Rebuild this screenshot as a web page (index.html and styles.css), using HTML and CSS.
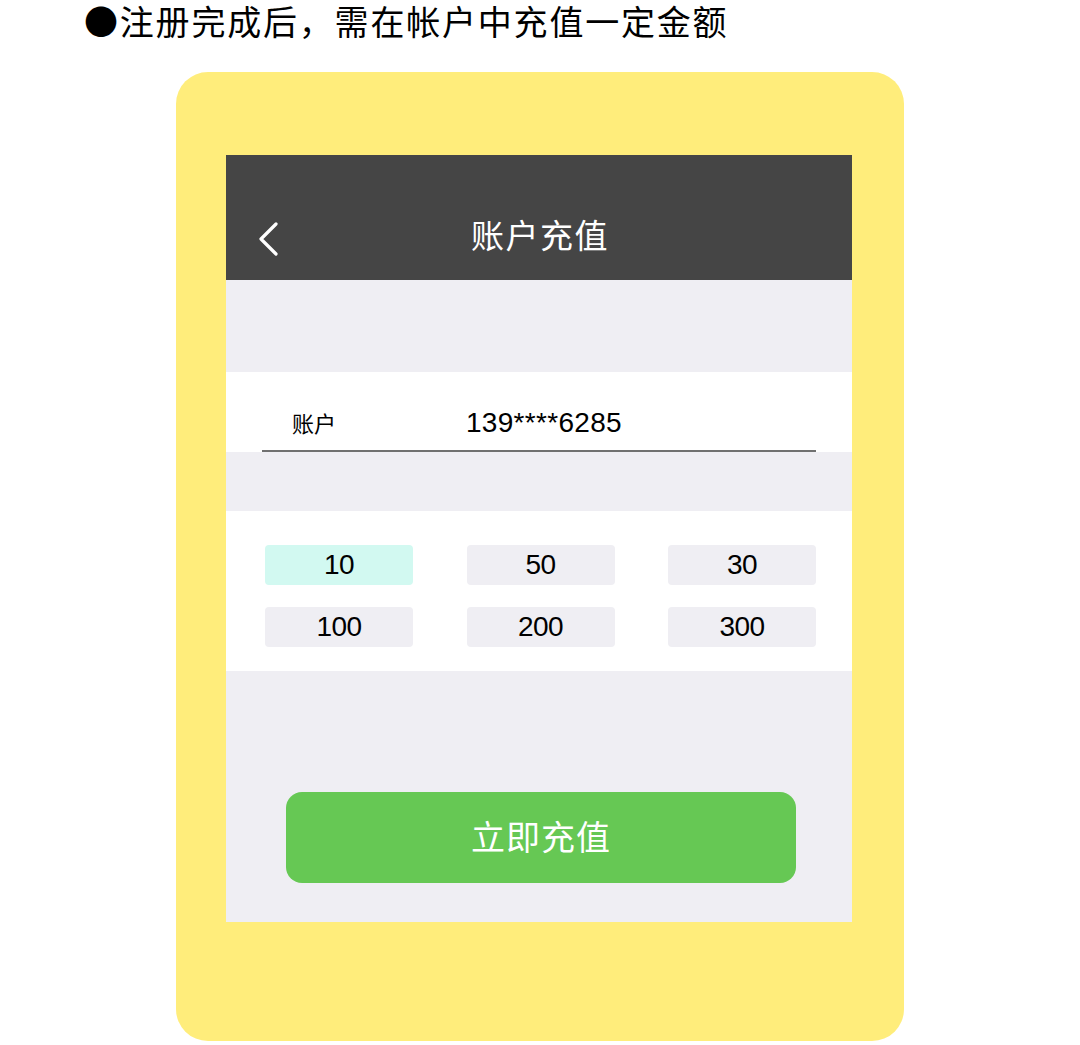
FILE: index.html
```html
<!DOCTYPE html>
<html lang="zh-CN">
<head>
    <meta charset="UTF-8">
    <meta name="viewport" content="width=device-width, initial-scale=1.0">
    <title>账户充值</title>
    <link rel="stylesheet" href="styles.css">
</head>
<body>
    <p class="intro">●注册完成后，需在帐户中充值一定金额</p>

    <div class="phone">
        <div class="screen">
            <header class="topbar">
                <svg class="back" width="24" height="36" viewBox="0 0 24 36">
                    <path d="M20 3 L5 18 L20 33" fill="none" stroke="#fff" stroke-width="3.2" stroke-linecap="round" stroke-linejoin="round"/>
                </svg>
                <h1>账户充值</h1>
            </header>

            <div class="spacer top"></div>

            <div class="account">
                <div class="account-row">
                    <span class="label">账户</span>
                    <span class="value">139****6285</span>
                </div>
            </div>

            <div class="spacer mid"></div>

            <div class="amounts">
                <button class="amount selected">10</button>
                <button class="amount">50</button>
                <button class="amount">30</button>
                <button class="amount">100</button>
                <button class="amount">200</button>
                <button class="amount">300</button>
            </div>

            <div class="submit-area">
                <button class="submit">立即充值</button>
            </div>
        </div>
    </div>
</body>
</html>
```

FILE: styles.css
```css
:root {
    --yellow: #ffed7b;
    --dark: #454545;
    --gray: #efeef3;
    --green: #66c854;
    --mint: #d2f9f1;
}

* {
    margin: 0;
    padding: 0;
    box-sizing: border-box;
}

body {
    font-family: "Noto Sans CJK SC", "Noto Sans", sans-serif;
    background: #fff;
    color: #000;
    width: 1080px;
}

.intro {
    font-family: "Noto Sans CJK SC", sans-serif;
    font-size: 34px;
    line-height: 42px;
    padding-left: 84px;
    letter-spacing: 1.8px;
}

.phone {
    margin: 30px 0 0 176px;
    width: 728px;
    height: 969px;
    background: var(--yellow);
    border-radius: 32px;
    padding: 83px 52px 0 50px;
}

.screen {
    width: 626px;
    background: var(--gray);
}

.topbar {
    height: 125px;
    background: var(--dark);
    color: #fff;
    display: flex;
    align-items: center;
    justify-content: center;
    position: relative;
}

.topbar h1 {
    font-size: 33px;
    font-weight: 400;
    letter-spacing: 1.5px;
    padding-top: 33px;
    margin-left: 2px;
}

.back {
    position: absolute;
    left: 30px;
    top: 66px;
}

.spacer.top {
    height: 92px;
}

.spacer.mid {
    height: 59px;
}

.account {
    background: #fff;
    height: 80px;
    padding: 0 36px;
}

.account-row {
    height: 80px;
    border-bottom: 2px solid #707070;
    display: flex;
    align-items: center;
    padding-top: 24px;
}

.label {
    font-size: 22px;
    width: 204px;
    padding-left: 30px;
    margin-top: -2px;
}

.value {
    font-family: "Liberation Sans", sans-serif;
    font-size: 28px;
    letter-spacing: 0.3px;
}

.amounts {
    background: #fff;
    height: 160px;
    padding: 34px 36px 0 39px;
    display: grid;
    grid-template-columns: repeat(3, 148px);
    grid-auto-rows: 40px;
    column-gap: 53.5px;
    row-gap: 22px;
}

.amount {
    border: none;
    border-radius: 4px;
    background: var(--gray);
    font-family: "Liberation Sans", sans-serif;
    font-size: 28px;
    color: #000;
    letter-spacing: -0.5px;
}

.amount.selected {
    background: var(--mint);
}

.submit-area {
    height: 251px;
    padding: 121px 56px 0 60px;
}

.submit {
    width: 510px;
    height: 91px;
    border: none;
    border-radius: 16px;
    background: var(--green);
    color: #fff;
    font-family: inherit;
    font-size: 34px;
    letter-spacing: 1px;
    padding-bottom: 4px;
}
```
